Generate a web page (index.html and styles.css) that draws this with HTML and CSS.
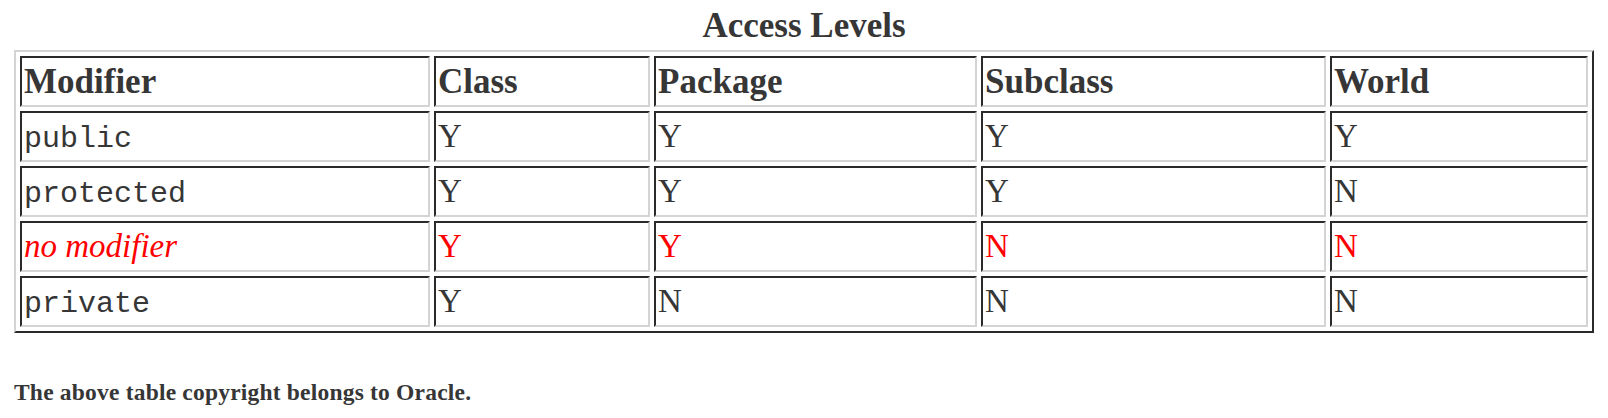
FILE: index.html
```html
<!DOCTYPE html>
<html lang="en">
<head>
<meta charset="utf-8">
<title>Access Levels</title>
<link rel="stylesheet" href="styles.css">
</head>
<body>
<main class="page">
  <table class="access">
    <caption class="access-caption">Access Levels</caption>
    <thead>
      <tr>
        <th class="col-mod">Modifier</th>
        <th class="col-class">Class</th>
        <th class="col-pkg">Package</th>
        <th class="col-sub">Subclass</th>
        <th class="col-world">World</th>
      </tr>
    </thead>
    <tbody>
      <tr>
        <td><code class="kw">public</code></td>
        <td>Y</td>
        <td>Y</td>
        <td>Y</td>
        <td>Y</td>
      </tr>
      <tr>
        <td><code class="kw">protected</code></td>
        <td>Y</td>
        <td>Y</td>
        <td>Y</td>
        <td>N</td>
      </tr>
      <tr class="highlight">
        <td><em>no modifier</em></td>
        <td>Y</td>
        <td>Y</td>
        <td>N</td>
        <td>N</td>
      </tr>
      <tr>
        <td><code class="kw">private</code></td>
        <td>Y</td>
        <td>N</td>
        <td>N</td>
        <td>N</td>
      </tr>
    </tbody>
  </table>
  <p class="note">The above table copyright belongs to Oracle.</p>
</main>
</body>
</html>
```
FILE: styles.css
```css
html, body {
  margin: 0;
  padding: 0;
  background: #ffffff;
}

body {
  font-family: "Liberation Serif", "Times New Roman", serif;
  color: #363636;
}

.page {
  padding: 6px 14px 0 14px;
}

.access {
  width: 100%;
  table-layout: fixed;
  border-collapse: separate;
  border-spacing: 4px;
  border-style: solid;
  border-width: 2px;
  border-color: #d4d4d4 #2a2a2a #2a2a2a #d4d4d4;
}

.access-caption {
  font-size: 35px;
  font-weight: bold;
  text-align: center;
  padding-bottom: 4px;
  color: #363636;
}

.access th,
.access td {
  box-sizing: border-box;
  height: 51px;
  padding: 0 2px;
  text-align: left;
  vertical-align: middle;
  line-height: 1;
  border-style: solid;
  border-width: 2px;
  border-color: #2a2a2a #d4d4d4 #d4d4d4 #2a2a2a;
}

.access th {
  font-size: 35px;
  font-weight: bold;
}

.access td {
  font-size: 33px;
  font-weight: normal;
}

.col-mod { width: 410px; }
.col-class { width: 216px; }
.col-pkg { width: 323px; }
.col-sub { width: 345px; }
.col-world { width: 258px; }

.kw {
  font-family: "Liberation Mono", "Courier New", monospace;
  font-size: 30px;
}

.highlight td {
  color: #ff0000;
}

.highlight em {
  font-style: italic;
}

.note {
  margin: 46px 0 0 0;
  font-size: 23.5px;
  letter-spacing: 0.2px;
  font-weight: bold;
  line-height: normal;
}
```
